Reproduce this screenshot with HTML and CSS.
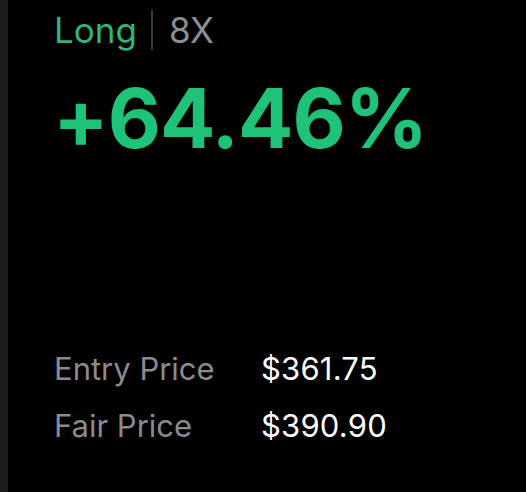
FILE: index.html
```html
<!DOCTYPE html>
<html lang="en">
<head>
  <meta charset="UTF-8">
  <title>Position</title>
  <link rel="stylesheet" href="styles.css">
</head>
<body>
  <div class="screen">
    <div class="edge"></div>

    <div class="card">
      <div class="side">
        <span class="dir">Long</span>
        <span class="sep"></span>
        <span class="lev">8X</span>
      </div>

      <div class="pnl">+64.46%</div>

      <div class="rows">
        <div class="row">
          <span class="label">Entry Price</span>
          <span class="value">$361.75</span>
        </div>
        <div class="row">
          <span class="label">Fair Price</span>
          <span class="value">$390.90</span>
        </div>
      </div>
    </div>
  </div>
</body>
</html>
```

FILE: styles.css
```css
html, body {
  margin: 0;
  padding: 0;
  background: #000;
  color: #fff;
  font-family: Inter, "Noto Sans", sans-serif;
}

.screen {
  display: flex;
  height: 492px;
  overflow: hidden;
}

.edge {
  width: 8px;
  flex: none;
  background: #1c1c1e;
}

.card {
  flex: 1;
  padding: 10px 0 0 46px;
}

.side {
  display: flex;
  align-items: center;
  height: 40px;
  font-size: 35px;
}

.dir {
  color: #2fb577;
}

.sep {
  width: 2px;
  height: 40px;
  margin: 0 16px 0 14px;
  background: #3a3a3c;
}

.lev {
  color: #8e8e93;
}

.pnl {
  margin: 21px 0 0 -1px;
  font-size: 82px;
  font-weight: 700;
  line-height: 96px;
  letter-spacing: -1px;
  color: #1fc279;
}

.rows {
  margin-top: 181px;
  display: flex;
  flex-direction: column;
  gap: 15px;
}

.row {
  display: flex;
  align-items: baseline;
  line-height: 42px;
}

.label {
  width: 207px;
  font-size: 31px;
  color: #8a8a8f;
}

.value {
  font-size: 31px;
  letter-spacing: 0.2px;
  color: #fff;
}
```
